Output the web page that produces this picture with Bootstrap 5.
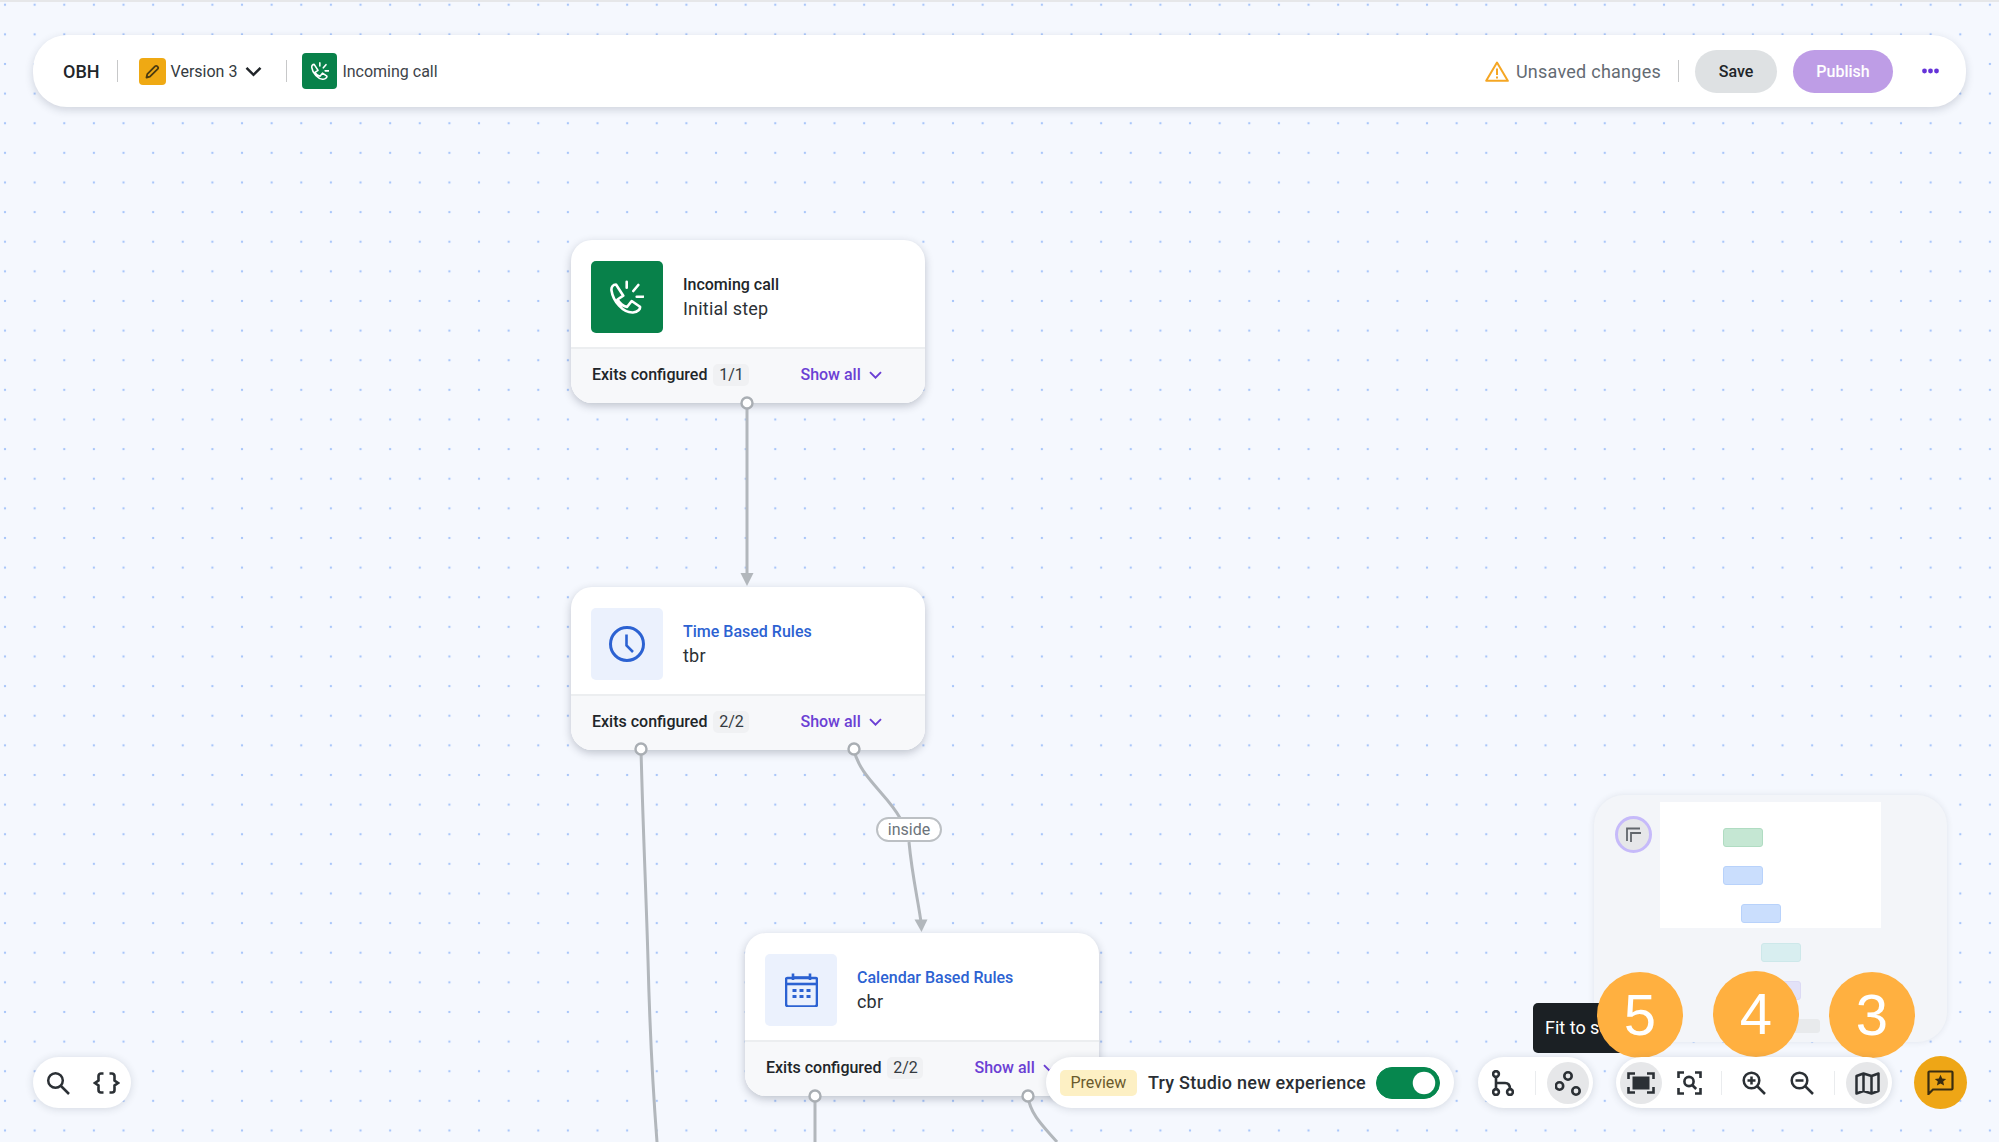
<!DOCTYPE html>
<html lang="en">
<head>
    <meta charset="UTF-8">
    <meta name="viewport" content="width=device-width, initial-scale=1.0">
    <title>Flow editor</title>
    <link href="https://cdn.jsdelivr.net/npm/bootstrap@5.3.0/dist/css/bootstrap.min.css" rel="stylesheet">
    <script src="https://cdn.jsdelivr.net/npm/bootstrap@5.3.0/dist/js/bootstrap.bundle.min.js"></script>
    <style>
        html, body { height: 100%; }
        body {
            font-family: Roboto, "Liberation Sans", sans-serif;
            color: #212529;
            overflow: hidden;
        }
        .studio-canvas {
            position: relative;
            height: 100vh;
            padding: 33px 33px 0 33px;
            border-top: 2px solid #e6e7e9;
            background-color: #f5f8fe;
            background-image: radial-gradient(circle, #a9c6f9 1px, transparent 1.6px);
            background-size: 29.63px 29.63px;
            background-position: -9.8px -12.1px;
        }
        .top-bar {
            height: 72px;
            padding: 0 27px 0 30px;
            background: #fff;
            border-radius: 34px;
            box-shadow: 0 3px 9px rgba(40, 50, 70, .18);
            font-size: 16px;
        }
        .top-bar .vr { height: 22px; align-self: center; }
        .flow-name { font-size: 18px; font-weight: 500; margin-right: 17px; }
        .version-icon { width: 27px; height: 27px; background: #efa913; border-radius: 4px; margin: 0 5px 0 21px; }
        .version-label { margin-right: 8px; padding-top: 1px; color: #343a40; }
        .step-icon { width: 35px; height: 36px; background: #08814a; border-radius: 4px; margin: 0 5px 0 15px; }
        .step-label { padding-top: 1px; color: #3d4349; }
        .unsaved { font-size: 18px; letter-spacing: .25px; color: #646b73; margin: 0 17px 0 7px; }
        .btn-save, .btn-publish {
            height: 43px;
            font-size: 16px;
            font-weight: 500;
            padding: 2px 0 0;
            border: 0;
            border-radius: 22px;
        }
        .btn-save { width: 82px; margin: 0 16px 0 16px; background: #dee1e3; color: #212529; }
        .btn-publish { width: 100px; margin-right: 29px; background: #be9de6; color: #fff; }

        .flow-node {
            position: absolute;
            width: 354px;
            height: 163px;
            border: 0;
            border-radius: 21px;
            box-shadow: 0 3px 9px rgba(30, 40, 60, .25);
        }
        .flow-node .card-body { height: 107px; flex: none; padding: 21px 20px 14px; gap: 20px; }
        .flow-node .card-footer {
            height: 56px;
            padding: 0 20px 2px 21px;
            background: #f7f8fa;
            border-top: 2px solid #eceef0;
            border-radius: 0 0 21px 21px;
            font-size: 16px;
            font-weight: 500;
        }
        .node-icon { width: 72px; height: 72px; border-radius: 5px; flex: none; }
        .node-icon-green { background: #08814a; }
        .node-icon-blue { background: #ebf1fd; }
        .node-type { font-size: 16px; font-weight: 500; line-height: 24px; }
        .node-type-blue { color: #2c62d2; }
        .node-name { font-size: 18px; letter-spacing: .2px; line-height: 24px; color: #2c3136; }
        .exit-count {
            margin-left: 6px;
            padding: 0;
            width: 36px;
            height: 22px;
            line-height: 22px;
            background: #f0f1f3;
            color: #343a40;
            font-size: 16px;
            font-weight: 400;
            border-radius: 5px;
        }
        .show-all { color: #6b3fd4; margin-left: 51px; gap: 8px; text-decoration: none; }
        .edge-layer { position: absolute; left: 0; top: -2px; pointer-events: none; }
        .edge-label {
            position: absolute;
            left: 876px;
            top: 815px;
            width: 66px;
            height: 25px;
            line-height: 21px;
            background: #fff;
            border: 2px solid #bcc0c4;
            border-radius: 13px;
            color: #6c737a;
            font-size: 16px;
            text-align: center;
        }

        .mini-map {
            position: absolute;
            left: 1594px;
            top: 793px;
            width: 353px;
            height: 247px;
            background: #f3f5f9;
            border-radius: 30px;
            box-shadow: 0 0 6px rgba(40, 50, 70, .1);
        }
        .mini-view { position: absolute; left: 66px; top: 7px; width: 221px; height: 126px; background: #fff; }
        .mini-node { position: absolute; width: 40px; height: 19px; border-radius: 3px; border: 1px solid; }
        .mini-green { background: #c5e7d3; border-color: #b0dcc2; }
        .mini-blue { background: #cadefd; border-color: #b8d2fb; }
        .mini-teal { background: #d8eef0; border-color: #cde8ea; }
        .mini-purple { background: #e3e2f8; border-color: #dcdaf5; }
        .mini-gray { background: #e8eaec; border-color: #e8eaec; height: 14px; }
        .mini-toggle {
            position: absolute;
            left: 21px;
            top: 21px;
            width: 37px;
            height: 37px;
            background: #e6e7e9;
            border: 3px solid #c6bafa;
            border-radius: 50%;
        }
        .hint-tip {
            position: absolute;
            left: 1533px;
            top: 1001px;
            width: 110px;
            height: 50px;
            padding: 0 12px;
            line-height: 50px;
            background: #1b2024;
            color: #fff;
            font-size: 18px;
            border-radius: 5px;
            white-space: nowrap;
            overflow: hidden;
        }
        .step-badge {
            position: absolute;
            width: 86px;
            height: 86px;
            line-height: 86px;
            background: #ffb040;
            color: #fff;
            border-radius: 50%;
            font-family: "Liberation Sans", sans-serif;
            font-size: 58px;
            text-align: center;
        }

        .bottom-bar {
            position: absolute;
            left: 33px;
            right: 32px;
            bottom: 33px;
            gap: 24px;
            z-index: 3;
        }
        .tool-pill {
            height: 51px;
            padding: 0 4px;
            gap: 6px;
            background: #fff;
            border-radius: 26px;
            box-shadow: 0 1px 8px rgba(40, 50, 70, .16);
        }
        .tool-pill .vr { height: 24px; margin: 0 5px; align-self: center; background: #adb5bd; }
        .tool-btn {
            width: 42px;
            height: 42px;
            padding: 0;
            border: 0;
            border-radius: 50%;
            background: transparent;
        }
        .tool-active { background: #e6e7e9; }
        .zoom-pill { margin-left: -1px; }
        .preview-pill { padding: 0 14px; gap: 0; }
        .preview-tag {
            width: 77px;
            height: 26px;
            line-height: 26px;
            background: #fdf0c4;
            color: #6a5a2c;
            font-size: 16px;
            font-weight: 400;
            border-radius: 5px;
            padding: 0;
        }
        .preview-text { font-size: 18px; font-weight: 500; letter-spacing: .24px; margin: 0 10px 0 11px; white-space: nowrap; color: #2a2f34; }
        .preview-switch { padding: 0; min-height: 0; margin: 0; line-height: 0; }
        .preview-switch .form-check-input {
            width: 64px;
            height: 32px;
            margin: 0;
            float: none;
            background-color: #06874e;
            border-color: #06874e;
        }
        .feedback-btn {
            width: 53px;
            height: 53px;
            padding: 0;
            border: 0;
            border-radius: 50%;
            background: #eea616;
            margin-left: -2px;
        }
    </style>
</head>
<body>
    <div class="studio-canvas">
        <!-- Top bar -->
        <header class="top-bar d-flex align-items-center">
            <span class="flow-name">OBH</span>
            <span class="vr"></span>
            <span class="version-icon d-flex align-items-center justify-content-center">
                <svg width="15" height="15" viewBox="0 0 15 15"><path d="M1.500 13.500l.8-3.400L10.200 2.200a1.300 1.300 0 0 1 1.900 0l.7.7a1.300 1.300 0 0 1 0 1.900L4.900 12.700z" fill="none" stroke="#4a3a10" stroke-width="1.800" stroke-linejoin="round"/></svg>
            </span>
            <span class="version-label">Version 3</span>
            <svg class="me-4" width="17" height="11" viewBox="0 0 17 11"><path d="M1.500 1.800l7 7 7-7" fill="none" stroke="#212529" stroke-width="2.500"/></svg>
            <span class="vr"></span>
            <span class="step-icon d-flex align-items-center justify-content-center">
                <svg width="18" height="18" viewBox="0 0 34 34"><g fill="none" stroke="#fff" stroke-width="3" stroke-linejoin="round" stroke-linecap="round"><path d="M6 4.500L13.300 15.700 7.500 19.500C9.500 23 13 26 17 27L21.700 21 30 26.700C30.500 29 28 32 23 32.500 13 33 3 21 1.500 10.500 1 7 3 4.500 6 4.500Z"/><path d="M16.700 1.700V7.700M28.300 5L23.300 11M26.700 16.700H33.300"/></g></svg>
            </span>
            <span class="step-label">Incoming call</span>
            <span class="ms-auto d-flex align-items-center">
                <svg width="24" height="21" viewBox="0 0 24 21"><path d="M12 1.500L22.800 19.800H1.200Z" fill="none" stroke="#f5a623" stroke-width="2" stroke-linejoin="round"/><path d="M12 7.500v6.500M12 15.500v2" stroke="#f5a623" stroke-width="2"/></svg>
            </span>
            <span class="unsaved">Unsaved changes</span>
            <span class="vr"></span>
            <button class="btn btn-save">Save</button>
            <button class="btn btn-publish">Publish</button>
            <svg width="17" height="6" viewBox="0 0 17 6"><g fill="#6533d8"><circle cx="2.500" cy="3" r="2.400"/><circle cx="8.500" cy="3" r="2.400"/><circle cx="14.500" cy="3" r="2.400"/></g></svg>
        </header>

        <!-- Flow nodes -->
        <div class="flow-node card" style="left: 571px; top: 238px;">
            <div class="card-body d-flex align-items-center">
                <div class="node-icon node-icon-green d-flex align-items-center justify-content-center">
                    <svg width="34" height="34" viewBox="0 0 34 34"><g fill="none" stroke="#fff" stroke-width="2.600" stroke-linejoin="round" stroke-linecap="round"><path d="M6 4.500L13.300 15.700 7.500 19.500C9.500 23 13 26 17 27L21.700 21 30 26.700C30.500 29 28 32 23 32.500 13 33 3 21 1.500 10.500 1 7 3 4.500 6 4.500Z"/><path d="M16.700 1.700V7.700M28.300 5L23.300 11M26.700 16.700H33.300"/></g></svg>
                </div>
                <div>
                    <div class="node-type">Incoming call</div>
                    <div class="node-name">Initial step</div>
                </div>
            </div>
            <div class="card-footer d-flex align-items-center">
                <span>Exits configured</span>
                <span class="badge exit-count">1/1</span>
                <a class="show-all d-flex align-items-center" href="#">Show all
                    <svg width="13" height="8" viewBox="0 0 13 8"><path d="M1 1.200l5.500 5.500 5.500-5.500" fill="none" stroke="#6b3fd4" stroke-width="1.900"/></svg>
                </a>
            </div>
        </div>

        <div class="flow-node card" style="left: 571px; top: 585px;">
            <div class="card-body d-flex align-items-center">
                <div class="node-icon node-icon-blue d-flex align-items-center justify-content-center">
                    <svg width="36" height="36" viewBox="0 0 36 36"><circle cx="18" cy="18" r="16.500" fill="none" stroke="#2c62d2" stroke-width="3"/><path d="M17.500 8.500v11l6.500 6.500" fill="none" stroke="#2c62d2" stroke-width="2.600"/></svg>
                </div>
                <div>
                    <div class="node-type node-type-blue">Time Based Rules</div>
                    <div class="node-name">tbr</div>
                </div>
            </div>
            <div class="card-footer d-flex align-items-center">
                <span>Exits configured</span>
                <span class="badge exit-count">2/2</span>
                <a class="show-all d-flex align-items-center" href="#">Show all
                    <svg width="13" height="8" viewBox="0 0 13 8"><path d="M1 1.200l5.500 5.500 5.500-5.500" fill="none" stroke="#6b3fd4" stroke-width="1.900"/></svg>
                </a>
            </div>
        </div>

        <div class="flow-node card" style="left: 745px; top: 931px;">
            <div class="card-body d-flex align-items-center">
                <div class="node-icon node-icon-blue d-flex align-items-center justify-content-center">
                    <svg width="33" height="34" viewBox="0 0 33 34"><path d="M2.500 5H30.500A1.500 1.500 0 0 1 32 6.500V31A2.500 2.500 0 0 1 29.500 33.500H3.500A2.500 2.500 0 0 1 1 31V6.500A1.500 1.500 0 0 1 2.500 5Z" fill="none" stroke="#2c62d2" stroke-width="2.600"/><path d="M1 11H32" stroke="#2c62d2" stroke-width="2.600"/><path d="M8 .5V7M25 .5V7M8 4.500H25" stroke="#2c62d2" stroke-width="2.600"/><g fill="#2c62d2"><rect x="7.500" y="16" width="4" height="3"/><rect x="14.500" y="16" width="4" height="3"/><rect x="21.500" y="16" width="4" height="3"/><rect x="7.500" y="22" width="4" height="3"/><rect x="14.500" y="22" width="4" height="3"/><rect x="21.500" y="22" width="4" height="3"/></g></svg>
                </div>
                <div>
                    <div class="node-type node-type-blue">Calendar Based Rules</div>
                    <div class="node-name">cbr</div>
                </div>
            </div>
            <div class="card-footer d-flex align-items-center">
                <span>Exits configured</span>
                <span class="badge exit-count">2/2</span>
                <a class="show-all d-flex align-items-center" href="#">Show all
                    <svg width="13" height="8" viewBox="0 0 13 8"><path d="M1 1.200l5.500 5.500 5.500-5.500" fill="none" stroke="#6b3fd4" stroke-width="1.900"/></svg>
                </a>
            </div>
        </div>

        <!-- Edges and ports -->
        <svg class="edge-layer" width="1999" height="1142" viewBox="0 0 1999 1142">
            <g fill="none" stroke="#b2b7bc" stroke-width="3">
                <path d="M747 403V574"/>
                <path d="M641 749C643 830 646 890 648 960 650 1040 653 1090 657 1142"/>
                <path d="M854 749C858 775 888 795 900 818"/>
                <path d="M909 842C912 875 918 900 921 922"/>
                <path d="M815 1096V1142"/>
                <path d="M1028 1096C1030 1115 1045 1128 1057 1142"/>
            </g>
            <g fill="#b2b7bc">
                <path d="M740.500 573H753.500L747 586Z"/>
                <path d="M914.500 919.500H927.500L921.500 932Z"/>
            </g>
            <g fill="#fff" stroke="#a9aeb3" stroke-width="2.400">
                <circle cx="747" cy="403" r="5.500"/>
                <circle cx="641" cy="749" r="5.500"/>
                <circle cx="854" cy="749" r="5.500"/>
                <circle cx="815" cy="1096" r="5.500"/>
                <circle cx="1028" cy="1096" r="5.500"/>
            </g>
        </svg>
        <div class="edge-label">inside</div>

        <!-- Mini map -->
        <div class="mini-map">
            <div class="mini-view"></div>
            <div class="mini-node mini-green" style="left: 129px; top: 33px;"></div>
            <div class="mini-node mini-blue" style="left: 129px; top: 71px;"></div>
            <div class="mini-node mini-blue" style="left: 147px; top: 109px;"></div>
            <div class="mini-node mini-teal" style="left: 167px; top: 148px;"></div>
            <div class="mini-node mini-purple" style="left: 167px; top: 186px;"></div>
            <div class="mini-node mini-gray" style="left: 186px; top: 224px;"></div>
            <div class="mini-toggle d-flex align-items-center justify-content-center">
                <svg width="16" height="16" viewBox="0 0 16 16"><path d="M1 14V1.500H14M5 15V6H15" fill="none" stroke="#62676c" stroke-width="1.800"/></svg>
            </div>
        </div>

        <div class="hint-tip">Fit to screen</div>
        <div class="step-badge" style="left: 1597px; top: 970px;">5</div>
        <div class="step-badge" style="left: 1713px; top: 969px;">4</div>
        <div class="step-badge" style="left: 1829px; top: 970px;">3</div>

        <!-- Bottom controls -->
        <div class="bottom-bar d-flex align-items-center">
            <div class="tool-pill d-flex align-items-center">
                <button class="tool-btn btn" aria-label="Search">
                    <svg width="24" height="24" viewBox="0 0 24 24"><circle cx="9.500" cy="9.500" r="7.300" fill="none" stroke="#2b3035" stroke-width="2.500"/><path d="M15 15l8 8" stroke="#2b3035" stroke-width="2.500"/></svg>
                </button>
                <button class="tool-btn btn" aria-label="Variables">
                    <svg width="27" height="22" viewBox="0 0 27 22"><path d="M10.500 1.500H8A2.500 2.500 0 0 0 5.500 4V8.500L2 11 5.500 13.500V18A2.500 2.500 0 0 0 8 20.500H10.500M16.500 1.500H19A2.500 2.500 0 0 1 21.500 4V8.500L25 11 21.500 13.500V18A2.500 2.500 0 0 1 19 20.500H16.500" fill="none" stroke="#2b3035" stroke-width="2.600"/></svg>
                </button>
            </div>

            <div class="tool-pill preview-pill d-flex align-items-center ms-auto">
                <span class="badge preview-tag">Preview</span>
                <span class="preview-text">Try Studio new experience</span>
                <div class="form-check form-switch preview-switch">
                    <input class="form-check-input" type="checkbox" role="switch" checked aria-label="Try Studio new experience">
                </div>
            </div>

            <div class="tool-pill d-flex align-items-center">
                <button class="tool-btn btn" aria-label="Branches">
                    <svg width="22" height="26" viewBox="0 0 22 26"><g fill="none" stroke="#2b3035" stroke-width="2.600"><circle cx="4" cy="4" r="2.900"/><circle cx="4" cy="22" r="2.900"/><circle cx="18" cy="22" r="2.900"/><path d="M4 7V19M4 13H13C16 13 18 15 18 19"/></g></svg>
                </button>
                <span class="vr"></span>
                <button class="tool-btn btn tool-active" aria-label="Nodes">
                    <svg width="26" height="26" viewBox="0 0 26 26"><g fill="none" stroke="#2b3035" stroke-width="2.600"><circle cx="13" cy="6" r="3.700"/><circle cx="4.500" cy="16" r="3.700"/><circle cx="21" cy="21" r="3.700"/></g></svg>
                </button>
            </div>

            <div class="tool-pill zoom-pill d-flex align-items-center">
                <button class="tool-btn btn tool-active" aria-label="Fit to screen">
                    <svg width="28" height="22" viewBox="0 0 28 22"><path d="M1.500 7V1.500H8M20 1.500H26.500V7M26.500 15V20.500H20M8 20.500H1.500V15" fill="none" stroke="#2b3035" stroke-width="2.600"/><rect x="5.500" y="4.500" width="17" height="13" fill="#2b3035"/></svg>
                </button>
                <button class="tool-btn btn" aria-label="Focus">
                    <svg width="25" height="24" viewBox="0 0 25 24"><path d="M1.500 7V1.500H7M18 1.500H23.500V7M23.500 17V22.500H18M7 22.500H1.500V17" fill="none" stroke="#2b3035" stroke-width="2.600"/><circle cx="12" cy="10.500" r="4.600" fill="none" stroke="#2b3035" stroke-width="2.600"/><path d="M15.200 14l4 4" stroke="#2b3035" stroke-width="2.600"/></svg>
                </button>
                <span class="vr"></span>
                <button class="tool-btn btn" aria-label="Zoom in">
                    <svg width="24" height="24" viewBox="0 0 24 24"><circle cx="9.500" cy="9.500" r="7.800" fill="none" stroke="#2b3035" stroke-width="2.500"/><path d="M15 15l8 8M9.500 5.500v8M5.500 9.500h8" stroke="#2b3035" stroke-width="2.500"/></svg>
                </button>
                <button class="tool-btn btn" aria-label="Zoom out">
                    <svg width="24" height="24" viewBox="0 0 24 24"><circle cx="9.500" cy="9.500" r="7.800" fill="none" stroke="#2b3035" stroke-width="2.500"/><path d="M15 15l8 8M5.500 9.500h8" stroke="#2b3035" stroke-width="2.500"/></svg>
                </button>
                <span class="vr"></span>
                <button class="tool-btn btn tool-active" aria-label="Map">
                    <svg width="25" height="23" viewBox="0 0 25 23"><path d="M1.500 4L8.500 1.500 16.500 4 23.500 1.500V19L16.500 21.500 8.500 19 1.500 21.500ZM8.500 1.500V19M16.500 4V21.500" fill="none" stroke="#2b3035" stroke-width="2.500" stroke-linejoin="round"/></svg>
                </button>
            </div>

            <button class="feedback-btn btn d-flex align-items-center justify-content-center" aria-label="Feedback">
                <svg width="27" height="25" viewBox="0 0 27 25"><path d="M2.500 1.500H24.500A1 1 0 0 1 25.500 2.500V18.500A1 1 0 0 1 24.500 19.500H6L1.500 24V2.500A1 1 0 0 1 2.500 1.500Z" fill="none" stroke="#3a2d10" stroke-width="2.200"/><path d="M13.500 4.800l1.700 3.700 4 .4-3 2.700.9 4-3.600-2.100-3.600 2.100.9-4-3-2.700 4-.4Z" fill="#3a2d10"/></svg>
            </button>
        </div>
    </div>
</body>
</html>
